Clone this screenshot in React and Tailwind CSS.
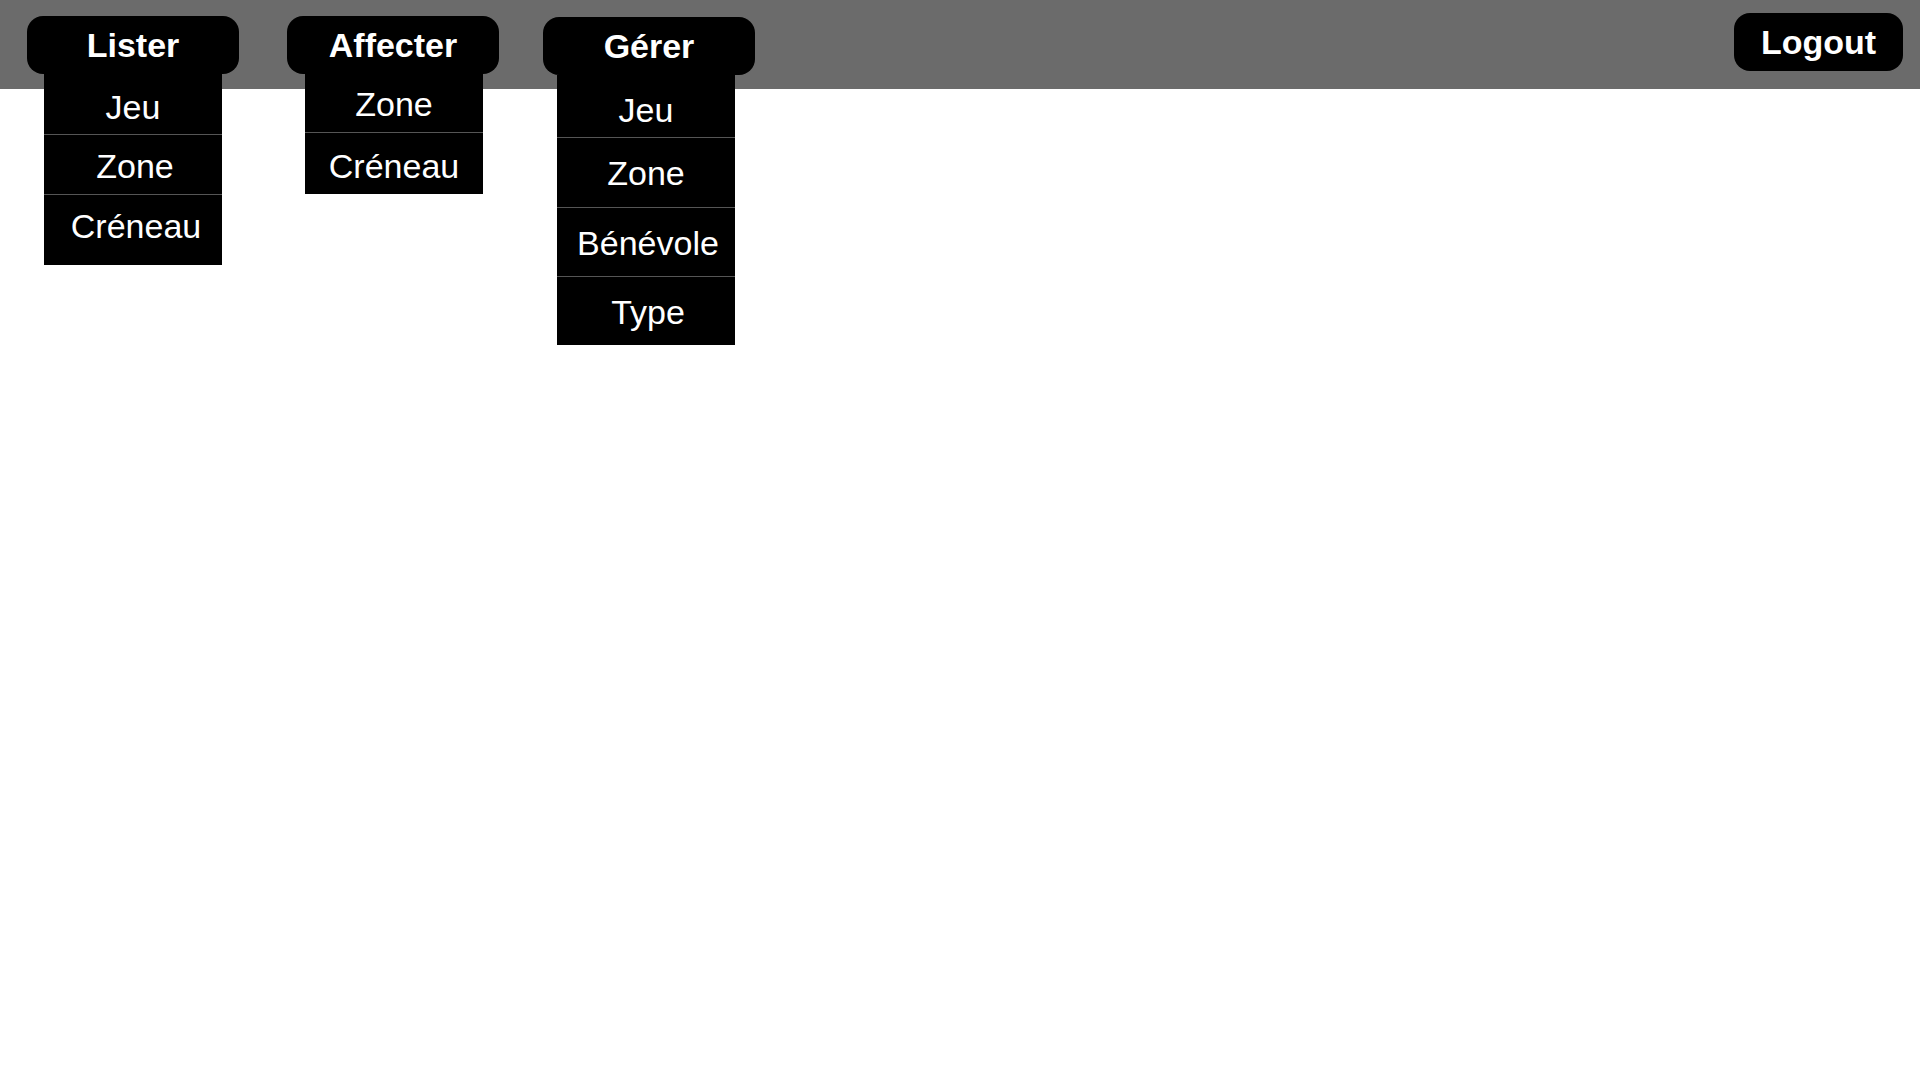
import React from "react";

const menus = [
  {
    label: "Lister",
    margin: "ml-[27px] mt-[16px]",
    shift: "",
    items: [
      { text: "Jeu", h: "h-[60px]", pad: "pt-[6px]" },
      { text: "Zone", h: "h-[60px]", pad: "pt-[2px] pl-[4px]" },
      { text: "Créneau", h: "h-[71px]", pad: "pb-[8px] pl-[6px]" },
    ],
  },
  {
    label: "Affecter",
    margin: "ml-[48px] mt-[16px]",
    shift: "ml-[1px]",
    items: [
      { text: "Zone", h: "h-[58px]", pad: "pt-[2px]" },
      { text: "Créneau", h: "h-[62px]", pad: "pt-[4px]" },
    ],
  },
  {
    label: "Gérer",
    margin: "ml-[44px] mt-[17px]",
    shift: "ml-[-3px]",
    items: [
      { text: "Jeu", h: "h-[62px]", pad: "pt-[8px]" },
      { text: "Zone", h: "h-[70px]", pad: "pt-[1px]" },
      { text: "Bénévole", h: "h-[69px]", pad: "pt-[2px] pl-[4px]" },
      { text: "Type", h: "h-[69px]", pad: "pt-[2px] pl-[4px]" },
    ],
  },
];

function Menu({ menu }) {
  return (
    <div className={`relative ${menu.margin}`}>
      <button className="w-[212px] h-[58px] bg-black text-white font-bold text-[34px] rounded-[16px] flex items-center justify-center leading-none">
        {menu.label}
      </button>
      <div
        className={`absolute top-full left-1/2 -translate-x-1/2 ${menu.shift} w-[178px] bg-black flex flex-col z-10`}
      >
        {menu.items.map((item, i) => (
          <div
            key={item.text}
            className={`${item.h} ${item.pad} flex items-center justify-center text-white text-[34px] leading-none ${
              i > 0 ? "border-t border-[#555]" : ""
            }`}
          >
            {item.text}
          </div>
        ))}
      </div>
    </div>
  );
}

export default function App() {
  return (
    <div
      className="min-h-screen bg-white"
      style={{ fontFamily: '"Liberation Sans", Helvetica, Arial, sans-serif' }}
    >
      <header className="h-[89px] bg-[#6b6b6b] flex items-start">
        {menus.map((menu) => (
          <Menu key={menu.label} menu={menu} />
        ))}
        <button className="ml-auto mr-[17px] mt-[13px] w-[169px] h-[58px] bg-black text-white font-bold text-[34px] rounded-[16px] flex items-center justify-center leading-none">
          Logout
        </button>
      </header>
    </div>
  );
}
